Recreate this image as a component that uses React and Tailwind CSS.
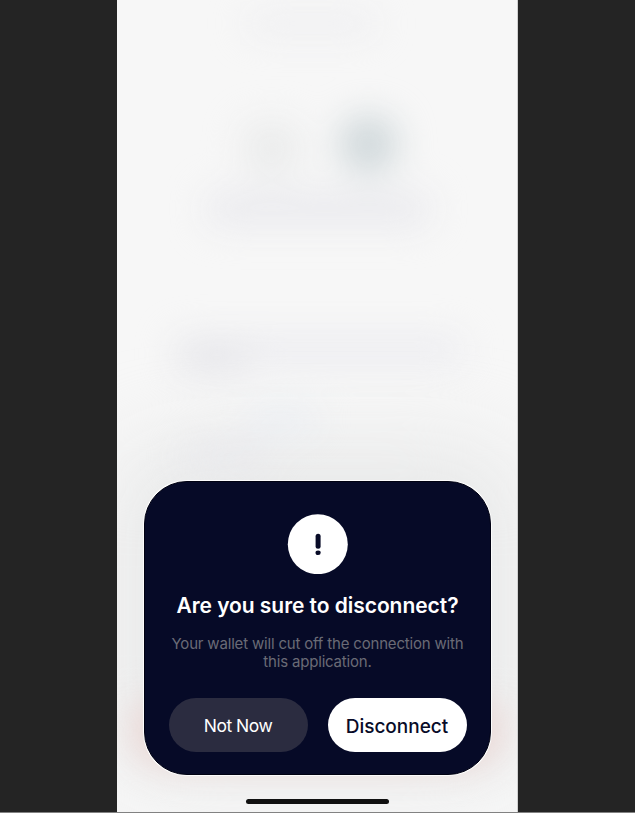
function Backdrop() {
  return (
    <svg viewBox="0 0 401 813" className="pointer-events-none absolute inset-0 h-full w-full" aria-hidden="true">
      <defs>
        <filter id="soft" x="-100%" y="-200%" width="300%" height="500%" colorInterpolationFilters="sRGB">
          <feGaussianBlur stdDeviation="18" />
        </filter>
        <filter id="wide" x="-50%" y="-50%" width="200%" height="200%" colorInterpolationFilters="sRGB">
          <feGaussianBlur stdDeviation="45" />
        </filter>
        <filter id="glow" x="-50%" y="-100%" width="200%" height="300%" colorInterpolationFilters="sRGB">
          <feGaussianBlur stdDeviation="16" />
        </filter>
      </defs>
      <rect x="0" y="450" width="401" height="325" rx="50" fill="#e7e8e8" filter="url(#wide)" />
      <g filter="url(#soft)">
        <rect x="130" y="14" width="130" height="18" rx="9" fill="#ececef" />
        <rect x="126" y="122" width="58" height="52" rx="20" fill="#eaebeb" />
        <rect x="224" y="116" width="56" height="56" rx="26" fill="#ccd5d8" />
        <rect x="90" y="192" width="224" height="34" rx="12" fill="#eaeaee" />
        <rect x="58" y="338" width="290" height="24" rx="12" fill="#eaeaef" />
        <rect x="60" y="340" width="72" height="34" rx="12" fill="#e6e6ea" />
        <rect x="130" y="410" width="70" height="20" rx="10" fill="#e9edf3" />
        <rect x="62" y="444" width="90" height="24" rx="12" fill="#e8e8ec" />
      </g>
      <rect x="12" y="694" width="377" height="76" rx="38" fill="#ebdad8" filter="url(#glow)" />
    </svg>
  );
}

function ExclamationIcon() {
  return (
    <svg viewBox="0 0 61 60" className="h-[60px] w-[61px]" aria-hidden="true">
      <circle cx="30.8" cy="30.2" r="30" fill="#fff" />
      <rect x="28.6" y="19.8" width="5" height="15" rx="2.5" fill="#080b27" />
      <ellipse cx="31.1" cy="38.7" rx="2.6" ry="2.3" fill="#080b27" />
    </svg>
  );
}

export default function App() {
  return (
    <div className="flex h-[813px] w-[635px] justify-center border-b border-[#828282] bg-[#242424] font-['Inter',sans-serif]">
      <main className="relative flex h-[812px] w-[401px] flex-col items-center justify-end overflow-hidden border-r border-[#d0d0d0] bg-[#f7f7f7] pl-px">
        <Backdrop />
        <section
          role="dialog"
          className="relative flex h-[294px] w-[347px] flex-col items-center rounded-[43px] border border-[#010212] bg-[#060a27] pt-8 shadow-[0_0_0_1px_#fcfcfc]"
        >
          <ExclamationIcon />
          <h1 className="mt-[19px] whitespace-nowrap text-[21px] font-semibold leading-[26px] tracking-[-0.05px] text-white">
            Are you sure to disconnect?
          </h1>
          <p className="mt-4 whitespace-nowrap text-center text-[15px] leading-[18px] tracking-[-0.18px] text-[#6a6b76]">
            Your wallet will cut off the connection with
            <br />
            this application.
          </p>
          <div className="mt-[27px] flex gap-5">
            <button className="h-[54px] w-[139px] rounded-full bg-[#2b2c40] pt-[3px] text-[17.5px] tracking-[-0.5px] text-white">
              Not Now
            </button>
            <button className="h-[54px] w-[139px] rounded-full bg-white pt-[5px] text-[19px] font-medium text-[#080b27]">
              Disconnect
            </button>
          </div>
        </section>
        <div className="relative mb-2 mt-6 h-[5px] w-[143px] shrink-0 rounded-full bg-[#111]" />
      </main>
    </div>
  );
}
